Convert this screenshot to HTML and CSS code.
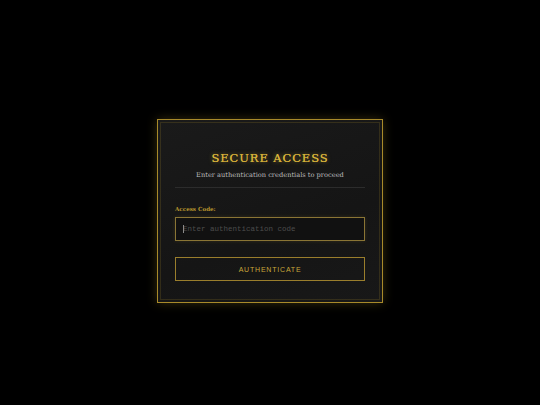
FILE: index.html
```html
<!DOCTYPE html>
<html>
<head>
<meta charset="utf-8">
<link rel="stylesheet" href="styles.css">
</head>
<body>
<div class="card">
  <h1 class="title">SECURE ACCESS</h1>
  <p class="subtitle">Enter authentication credentials to proceed</p>
  <div class="divider"></div>
  <label class="label" for="code">Access Code:</label>
  <div class="field">
    <input id="code" class="input" type="text" placeholder="Enter authentication code">
    <span class="caret"></span>
  </div>
  <button class="btn">AUTHENTICATE</button>
</div>
</body>
</html>
```

FILE: styles.css
```css
html, body {
  margin: 0;
  padding: 0;
  background: #000000;
}
body {
  width: 540px;
  height: 405px;
  display: flex;
  justify-content: center;
  align-items: flex-start;
  box-sizing: border-box;
  padding-top: 119px;
  font-family: "DejaVu Serif", "Liberation Serif", serif;
}
.card {
  position: relative;
  width: 226px;
  height: 184px;
  box-sizing: border-box;
  border: 1px solid #a88a2a;
  background: linear-gradient(160deg, #1a1a1a 0%, #151515 60%, #181818 100%);
  box-shadow: 0 0 10px rgba(212, 175, 55, 0.25);
  padding: 31px 17px 0;
  display: flex;
  flex-direction: column;
}
.card::before {
  content: "";
  position: absolute;
  inset: 2px;
  border: 1px solid rgba(168, 138, 42, 0.2);
  pointer-events: none;
}
.title {
  margin: 0;
  text-align: center;
  font-size: 11.5px;
  font-weight: normal;
  letter-spacing: 0.9px;
  color: #d6b13a;
  text-shadow: 0 0 4px rgba(212, 175, 55, 0.6), 0 0 0.4px #d6b13a;
  line-height: 14px;
}
.subtitle {
  margin: 6px 0 0;
  text-align: center;
  font-size: 6.65px;
  color: #bdbdbd;
  line-height: 9px;
}
.divider {
  height: 1px;
  background: #2c2c2c;
  margin-top: 7px;
}
.label {
  margin-top: 17px;
  font-size: 5.6px;
  font-weight: bold;
  color: #b8962e;
  line-height: 8px;
}
.field {
  position: relative;
  margin-top: 4px;
  display: flex;
}
.input {
  flex: 1;
  margin: 0;
  height: 24px;
  box-sizing: border-box;
  background: #111111;
  border: 1px solid #8a7535;
  padding: 0 7px;
  font-family: "Liberation Mono", "DejaVu Sans Mono", monospace;
  font-size: 7.5px;
  color: #cfcfcf;
  outline: none;
  box-shadow: 0 0 4px rgba(212, 175, 55, 0.15);
}
.input::placeholder {
  color: #4c4c4c;
}
.caret {
  position: absolute;
  left: 8px;
  top: 8px;
  width: 1px;
  height: 8px;
  background: #8a8a8a;
}
.btn {
  margin-top: 16px;
  height: 24px;
  box-sizing: border-box;
  background: transparent;
  border: 1px solid #9a7e2c;
  color: #c9a73a;
  font-family: "Liberation Sans", Arial, sans-serif;
  font-size: 7px;
  letter-spacing: 0.8px;
  padding: 0;
}
```
